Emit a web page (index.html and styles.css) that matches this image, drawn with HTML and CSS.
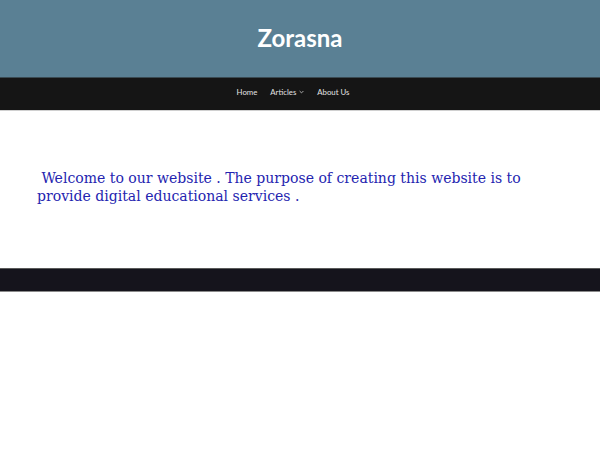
FILE: index.html
```html
<!DOCTYPE html>
<html>
<head>
<meta charset="utf-8">
<link rel="stylesheet" href="styles.css">
</head>
<body>
<header class="site-header">
  <h1 class="site-title">Zorasna</h1>
</header>
<nav class="main-nav">
  <a class="nav-item" href="#">Home</a>
  <a class="nav-item" href="#">Articles <svg class="caret" width="5" height="4" viewBox="0 0 5 4"><path d="M0.6 1 L2.5 2.9 L4.4 1" fill="none" stroke="#cfcfcf" stroke-width="0.8"/></svg></a>
  <a class="nav-item" href="#">About Us</a>
</nav>
<main class="content">
  <p class="intro">&nbsp;Welcome to our website . The purpose of creating this website is to provide digital educational services .</p>
</main>
<footer class="site-footer"></footer>
</body>
</html>
```
FILE: styles.css
```css
html, body {
  margin: 0;
  padding: 0;
  background: #ffffff;
}
.site-header {
  height: 77px;
  background: #5a8094;
  display: flex;
  align-items: center;
  justify-content: center;
}
.site-title {
  margin: 0 0 2px 0;
  font-family: Lato, "Liberation Sans", sans-serif;
  font-weight: 700;
  font-size: 24px;
  color: #ffffff;
}
.main-nav {
  height: 34px;
  background: #151515;
  border-top: 1px solid #3a4a52;
  border-bottom: 1px solid #d0d0d0;
  display: flex;
  align-items: center;
  justify-content: center;
  gap: 13px;
  padding: 0 14px 4px 0;
  box-sizing: border-box;
}
.nav-item {
  font-family: Lato, "Liberation Sans", sans-serif;
  font-size: 7.8px;
  color: #e2e2e2;
  text-decoration: none;
  display: flex;
  align-items: center;
  gap: 3px;
}
.caret {
  display: block;
}
.content {
  height: 157px;
  padding: 0 37px;
  box-sizing: border-box;
  overflow: hidden;
}
.intro {
  margin: 0;
  padding-top: 59px;
  font-family: "DejaVu Serif Condensed", "DejaVu Serif", serif;
  font-stretch: condensed;
  font-size: 15.6px;
  line-height: 17.5px;
  color: #2424b0;
}
.site-footer {
  height: 22px;
  background: #15141c;
  border-top: 1px solid #5a5a5a;
  border-bottom: 1px solid #8a8a8a;
}
```
